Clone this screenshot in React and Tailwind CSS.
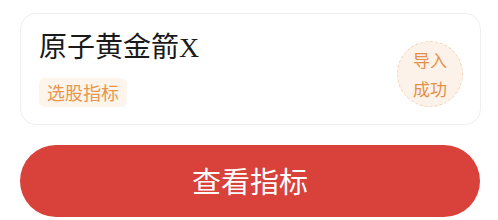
import React from "react";

const IndicatorCard = () => (
  <div className="ml-5 mr-[17px] mt-[13px] h-[112px] rounded-2xl border border-[#efefef] bg-white flex items-start justify-between">
    <div className="pl-[18px] pt-[18px]">
      <div className="font-['Liberation_Serif','Noto_Sans_CJK_SC',serif] text-[28px] leading-[32px] text-[#1a1a1a]">
        原子黄金箭X
      </div>
      <div className="mt-[14px] inline-block rounded-md bg-[#fdf4ec] px-2 font-['Noto_Sans_CJK_SC',sans-serif] text-[18px] leading-[29px] text-[#e8964c]">
        选股指标
      </div>
    </div>
    <div className="mt-[27px] mr-[17px] w-[66px] h-[66px] rounded-full border border-dashed border-[#f3d4b6] bg-[#fdf2e9] flex flex-col items-center justify-center font-['Noto_Sans_CJK_SC',sans-serif] text-[17px] leading-[29px] text-[#e38f48]">
      <span>导入</span>
      <span>成功</span>
    </div>
  </div>
);

export default function App() {
  return (
    <div className="w-[498px] h-[220px] bg-white overflow-hidden">
      <IndicatorCard />
      <button className="mt-5 ml-5 w-[460px] h-[72px] rounded-full bg-[#d9413b] font-['Noto_Sans_CJK_SC',sans-serif] text-[29px] text-white flex items-center justify-center">
        查看指标
      </button>
    </div>
  );
}
